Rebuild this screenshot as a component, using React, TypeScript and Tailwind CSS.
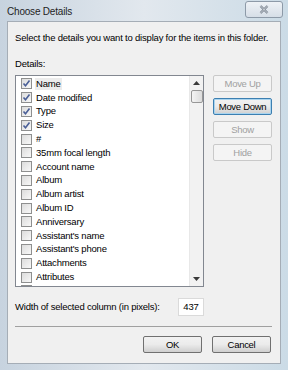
import React from "react";

const items: { label: string; checked: boolean }[] = [
  { label: "Name", checked: true },
  { label: "Date modified", checked: true },
  { label: "Type", checked: true },
  { label: "Size", checked: true },
  { label: "#", checked: false },
  { label: "35mm focal length", checked: false },
  { label: "Account name", checked: false },
  { label: "Album", checked: false },
  { label: "Album artist", checked: false },
  { label: "Album ID", checked: false },
  { label: "Anniversary", checked: false },
  { label: "Assistant's name", checked: false },
  { label: "Assistant's phone", checked: false },
  { label: "Attachments", checked: false },
  { label: "Attributes", checked: false },
  { label: "", checked: false },
];

function CheckBox({ checked }: { checked: boolean }) {
  return (
    <span className="flex h-[11px] w-[11px] shrink-0 items-center justify-center border border-[#8e8f8f] bg-gradient-to-br from-[#dcdcdc] to-[#f8f8f8]">
      {checked && (
        <svg width="9" height="9" viewBox="0 0 9 9">
          <path d="M1.5 4.5 L3.5 6.8 L7.5 1.5" fill="none" stroke="#4a5f97" strokeWidth="1.6" />
        </svg>
      )}
    </span>
  );
}

function Button({ label, disabled, focused }: { label: string; disabled?: boolean; focused?: boolean }) {
  return (
    <div
      className={`flex h-[17px] w-[59px] items-center justify-center whitespace-nowrap rounded-[2px] border text-[9.5px] leading-none tracking-[-0.3px] ${
        disabled
          ? "border-[#c9c9c9] bg-[#f4f4f4] text-[#a0a0a0]"
          : focused
          ? "border-[#3c7fb1] bg-gradient-to-b from-[#f2f2f2] via-[#ebebeb] to-[#cfcfcf] text-black shadow-[inset_0_0_0_1px_#a9d4ef]"
          : "border-[#707070] bg-gradient-to-b from-[#f2f2f2] via-[#ebebeb] to-[#cfcfcf] text-black"
      }`}
    >
      {label}
    </div>
  );
}

export default function App() {
  return (
    <div
      className="flex h-[370px] w-[288px] flex-col bg-gradient-to-r from-[#c7d3df] via-[#e2e8ee] to-[#cbdbe6] text-black"
      style={{ fontFamily: "'Liberation Sans', Arial, sans-serif" }}
    >
      {/* title bar */}
      <div className="flex h-[21px] items-start justify-between">
        <span className="pl-[7px] pt-[5px] text-[10px] leading-[13px] tracking-[-0.2px] text-[#1e1e1e]">Choose Details</span>
        <div className="mr-[5px] mt-[1px] flex h-[17px] w-[38px] items-center justify-center rounded-[3px] border border-[#8d9aa8] bg-gradient-to-b from-[#eef2f6] to-[#d6dee7]">
          <svg width="10" height="9" viewBox="0 0 10 9">
            <path d="M1.5 1 L8.5 8 M8.5 1 L1.5 8" stroke="#6b7684" strokeWidth="2.2" />
            <path d="M1.5 1 L8.5 8 M8.5 1 L1.5 8" stroke="#f4f6f8" strokeWidth="0.8" />
          </svg>
        </div>
      </div>

      {/* client area */}
      <div className="mx-[7px] flex h-[343px] flex-col border border-[#a5adb6] bg-[#f0f0f0] pl-[7px] pr-[8px] text-[9.5px] leading-[12px] tracking-[-0.2px]">
        <div className="mt-[10px] whitespace-nowrap">Select the details you want to display for the items in this folder.</div>
        <div className="mt-[14px]">Details:</div>

        <div className="mt-[5px] flex gap-[9px]">
          {/* list */}
          <div className="flex h-[212px] w-[189px] border border-[#828790] bg-white">
            <div className="flex flex-1 flex-col overflow-hidden pl-[5px] pt-[1px]">
              {items.map((item, i) => (
                <div key={i} className="flex h-[13.8px] shrink-0 items-center gap-[3px]">
                  <CheckBox checked={item.checked} />
                  {item.label && (
                    <span className={`px-[1px] ${i === 0 ? "bg-[#ececec]" : ""}`}>{item.label}</span>
                  )}
                </div>
              ))}
            </div>
            {/* scrollbar */}
            <div className="flex w-[14px] flex-col items-center border-l border-[#e8e8e8] bg-[#f2f2f2]">
              <div className="flex h-[14px] items-center justify-center">
                <svg width="7" height="4" viewBox="0 0 7 4">
                  <path d="M0 4 L3.5 0 L7 4 Z" fill="#3a3a3a" />
                </svg>
              </div>
              <div className="h-[13px] w-[12px] rounded-[2px] border border-[#979797] bg-gradient-to-r from-[#f4f4f4] to-[#dcdcdc]" />
              <div className="flex-1" />
              <div className="flex h-[14px] items-center justify-center">
                <svg width="7" height="4" viewBox="0 0 7 4">
                  <path d="M0 0 L3.5 4 L7 0 Z" fill="#3a3a3a" />
                </svg>
              </div>
            </div>
          </div>

          {/* side buttons */}
          <div className="flex flex-col gap-[6px]">
            <Button label="Move Up" disabled />
            <Button label="Move Down" focused />
            <Button label="Show" disabled />
            <Button label="Hide" disabled />
          </div>
        </div>

        <div className="mt-[11px] flex w-[189px] items-center justify-between">
          <span className="whitespace-nowrap">Width of selected column (in pixels):</span>
          <div className="flex h-[18px] w-[26px] items-center justify-center border border-[#dadada] bg-white">437</div>
        </div>

        <div className="mt-[10px] h-[1px] w-[257px] bg-[#a0a0a0]" />

        <div className="mt-[9px] flex justify-end gap-[10px] pr-[1px]">
          <Button label="OK" />
          <Button label="Cancel" />
        </div>
      </div>
    </div>
  );
}
